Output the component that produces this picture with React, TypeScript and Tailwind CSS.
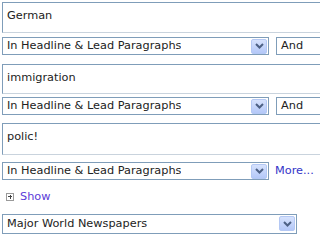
const font = { fontFamily: '"DejaVu Sans", Verdana, sans-serif' }

function Arrow() {
  return (
    <span className="flex h-[15px] w-[16px] items-center justify-center rounded-[2px] border border-[#b4c8f4] bg-gradient-to-b from-[#d6e2fd] to-[#b4c8f8]">
      <svg width="9" height="6" viewBox="0 0 9 6">
        <path d="M1 1 L4.5 4.5 L8 1" fill="none" stroke="#4d6185" strokeWidth="2" />
      </svg>
    </span>
  )
}

function Select({ label, width, height = 'h-[18px]' }: { label: string; width: string; height?: string }) {
  return (
    <div className={`flex ${height} ${width} shrink-0 items-center justify-between border border-[#7f9db9] bg-white pl-[4px] pr-[1px] text-[11.3px] text-[#222]`}>
      <span className="truncate leading-none">{label}</span>
      <Arrow />
    </div>
  )
}

function Box({ text, height }: { text: string; height: string }) {
  return (
    <div className={`${height} w-[330px] border border-[#7f9db9] border-b-[#c9d3dd] bg-white px-[4px] pt-[7px] text-[11.3px] leading-none text-[#222]`}>
      {text}
    </div>
  )
}

function AndBox() {
  return (
    <div className="flex h-[18px] w-[60px] shrink-0 items-center border border-[#7f9db9] bg-white pl-[4px] text-[11.3px] text-[#222]">
      And
    </div>
  )
}

export default function App() {
  return (
    <div className="h-[241px] w-[320px] overflow-hidden bg-white pl-[2px] pt-[2px]" style={font}>
      <Box text="German" height="h-[31px]" />
      <div className="mt-[4px] flex items-center gap-[7px]">
        <Select label="In Headline & Lead Paragraphs" width="w-[267px]" />
        <AndBox />
      </div>

      <div className="mt-[9px]">
        <Box text="immigration" height="h-[30px]" />
      </div>
      <div className="mt-[3px] flex items-center gap-[7px]">
        <Select label="In Headline & Lead Paragraphs" width="w-[267px]" />
        <AndBox />
      </div>

      <div className="mt-[8px]">
        <Box text="polic!" height="h-[32px]" />
      </div>
      <div className="mt-[7px] flex items-center gap-[6px]">
        <Select label="In Headline & Lead Paragraphs" width="w-[267px]" />
        <a className="text-[11.3px] text-[#3434c8]">More...</a>
      </div>

      <div className="mt-[9px] flex items-center gap-[6px] pl-[4px]">
        <span className="relative h-[8px] w-[8px] border border-[#9a9a9a]">
          <span className="absolute left-[1px] top-[2px] h-[1px] w-[4px] bg-[#444]" />
          <span className="absolute left-[2.5px] top-[0.5px] h-[4px] w-[1px] bg-[#444]" />
        </span>
        <a className="text-[11.3px] text-[#5a3ad8]">Show</a>
      </div>

      <div className="mt-[8px]">
        <Select label="Major World Newspapers" width="w-[295px]" height="h-[20px]" />
      </div>
    </div>
  )
}
